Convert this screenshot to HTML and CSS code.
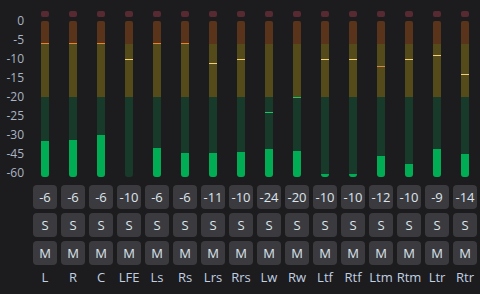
FILE: index.html
```html
<!DOCTYPE html>
<html lang="en">
<head>
  <meta charset="UTF-8">
  <title>Meters</title>
  <link rel="stylesheet" href="styles.css">
</head>
<body>
  <div class="mixer">
    <!-- dB scale -->
    <div class="scale">
      <span>0</span><span>-5</span><span>-10</span><span>-15</span><span>-20</span>
      <span>-25</span><span>-30</span><span>-45</span><span>-60</span>
    </div>
    <div class="channels" id="channels"></div>
  </div>

  <script>
    // name, peak value, fill height in px, peak marker top in px, marker colour
    const channels = [
      ["L", -6, 36, 22, "orange"],
      ["R", -6, 37, 22, "orange"],
      ["C", -6, 42, 22, "orange"],
      ["LFE", -10, 0, 38, "yellow"],
      ["Ls", -6, 29, 22, "orange"],
      ["Rs", -6, 24, 22, "orange"],
      ["Lrs", -11, 24, 42, "yellow"],
      ["Rrs", -10, 25, 38, "yellow"],
      ["Lw", -24, 28, 91, "green"],
      ["Rw", -20, 26, 76, "green"],
      ["Ltf", -10, 3, 38, "yellow"],
      ["Rtf", -10, 3, 38, "yellow"],
      ["Ltm", -12, 21, 45, "amber"],
      ["Rtm", -10, 13, 38, "yellow"],
      ["Ltr", -9, 28, 34, "yellow"],
      ["Rtr", -14, 23, 53, "yellow"]
    ];

    const list = document.getElementById("channels");

    channels.forEach(ch => {
      const el = document.createElement("div");
      el.className = "channel";
      el.innerHTML =
        '<div class="clip"></div>' +
        '<div class="meter">' +
          '<div class="fill" style="height:' + ch[2] + 'px"></div>' +
          '<div class="peak ' + ch[4] + '" style="top:' + ch[3] + 'px"></div>' +
        '</div>' +
        '<div class="btn first">' + ch[1] + '</div>' +
        '<div class="btn">S</div>' +
        '<div class="btn">M</div>' +
        '<div class="name">' + ch[0] + '</div>';
      list.appendChild(el);
    });
  </script>
</body>
</html>
```

FILE: styles.css
```css
* {
  margin: 0;
  padding: 0;
  box-sizing: border-box;
}

body {
  background-color: #1c1c1e;
  font-family: "Open Sans", "Noto Sans", sans-serif;
  color: #d8dfe8;
  overflow: hidden;
}

.mixer {
  display: flex;
}

/* Scale */
.scale {
  width: 33px;
  padding-top: 11px;
  padding-right: 9px;
  display: flex;
  flex-direction: column;
  align-items: flex-end;
  font-size: 12px;
  color: #aab4c4;
}

.scale span {
  height: 19px;
  line-height: 19px;
}

/* Channels */
.channels {
  display: flex;
  gap: 4px;
}

.channel {
  width: 24px;
  display: flex;
  flex-direction: column;
  align-items: center;
}

.clip {
  width: 8px;
  height: 6px;
  margin-top: 11px;
  border-radius: 2px;
  background-color: #572a31;
}

.meter {
  position: relative;
  width: 8px;
  height: 156px;
  margin-top: 4px;
  border-radius: 2px 2px 3px 3px;
  overflow: hidden;
  background: linear-gradient(to bottom,
    #59331a 0, #59331a 23px,
    #554a1a 23px, #554a1a 76px,
    #173a2a 76px, #173a2a 100%);
}

.fill {
  position: absolute;
  left: 0;
  bottom: 0;
  width: 100%;
  background-color: #00ad55;
}

.peak {
  position: absolute;
  left: 0;
  width: 100%;
  height: 1px;
}

.peak.orange { background-color: #e9822c; }
.peak.yellow { background-color: #f0cf7a; }
.peak.amber { background-color: #d4884a; }
.peak.green { background-color: #1fc265; }

/* Buttons */
.btn {
  width: 24px;
  height: 24px;
  margin-top: 4px;
  border-radius: 4px;
  background-color: #3b3b3f;
  font-size: 13px;
  line-height: 24px;
  text-align: center;
  color: #dde4ec;
}

.btn.first {
  margin-top: 8px;
}

.name {
  margin-top: 3px;
  font-size: 13px;
  line-height: 18px;
  color: #c0cfe2;
}
```
